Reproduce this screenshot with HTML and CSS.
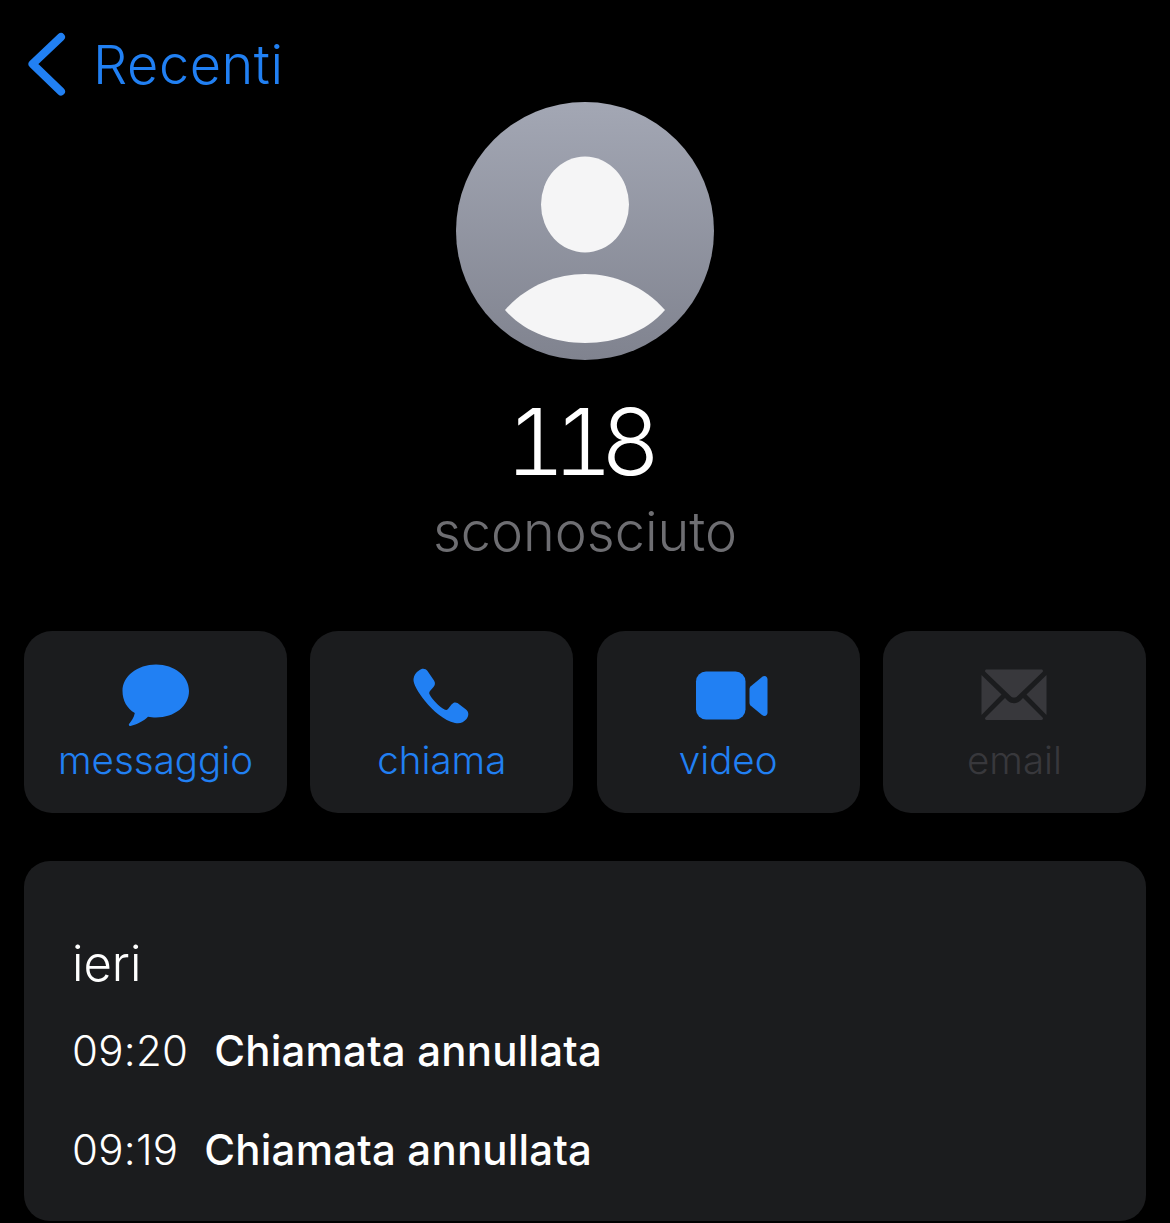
FILE: index.html
```html
<!DOCTYPE html>
<html lang="it">
<head>
<meta charset="utf-8">
<title>118</title>
<link rel="stylesheet" href="styles.css">
</head>
<body>
<div class="screen">
  <header class="nav">
    <svg class="chevron" viewBox="0 0 38 64" width="38" height="64"><path d="M33 5 L4.500 32 L33 59.500" fill="none" stroke="#2180f3" stroke-width="8" stroke-linecap="round" stroke-linejoin="round"/></svg>
    <span class="back-label">Recenti</span>
  </header>
  <section class="profile">
    <svg class="avatar" viewBox="0 0 258 258" width="258" height="258">
      <defs><linearGradient id="av" x1="0" y1="0" x2="0" y2="1"><stop offset="0" stop-color="#a3a7b4"/><stop offset="1" stop-color="#80838f"/></linearGradient></defs>
      <circle cx="129" cy="129" r="129" fill="url(#av)"/>
      <ellipse cx="129" cy="102.500" rx="44" ry="48" fill="#f5f5f6"/>
      <path d="M49 208 C70 184 100 172 129 172 C158 172 188 184 209 208 C190 230 160 241 129 241 C98 241 68 230 49 208 Z" fill="#f5f5f6"/>
    </svg>
    <h1 class="name">118</h1>
    <p class="subtitle">sconosciuto</p>
  </section>
  <nav class="actions">
    <div class="action">
      <svg class="icon" viewBox="-4 0 80 64" width="80" height="64"><path d="M36 2.500 C54.500 2.500 69 14 69 29 C69 44 54.500 55.500 36 55.500 C33 55.500 30.500 55.200 28 54.800 C24 59 17 62.500 10.500 64 C9 64.300 8.300 62.800 9.200 61.800 C11.500 59 14 55.500 14.800 51 C7 46.500 2.500 38.500 2.500 29 C2.500 14 17.500 2.500 36 2.500 Z" fill="#2180f3"/></svg>
      <span class="action-label">messaggio</span>
    </div>
    <div class="action">
      <svg class="icon" viewBox="0 0 80 64" width="80" height="64"><path d="M17 8.500 C20 6 23.500 6.500 25.500 9 L32 18.500 C33.500 21 33.200 23 31.500 25 L28 29 C27 30.300 27 31.500 27.800 32.800 C31 38.500 37 44.500 42.500 47.500 C44 48.300 45 48 46 47 L49.500 42.500 C51.500 40 53.500 40 55.500 41 L64 47.500 C67 50 67 54 64.500 57 C61.500 60.500 58 62 53 61 C42 58.500 31 49 23 39 C16 30 11 22 11.500 17 C12 13 14 10.500 17 8.500 Z" fill="#2180f3"/></svg>
      <span class="action-label">chiama</span>
    </div>
    <div class="action">
      <svg class="icon" viewBox="0 0 80 64" width="80" height="64"><rect x="8" y="9.500" width="49.500" height="48" rx="10" fill="#2180f3"/><path d="M62.500 24.500 L74 15 C76.500 13 79.500 14.200 79.500 17.500 L79.500 50.500 C79.500 53.800 76.500 55 74 53 L62.500 43.500 C61.800 42.800 61.500 42 61.500 41 L61.500 27 C61.500 26 61.800 25.200 62.500 24.500 Z" fill="#2180f3"/></svg>
      <span class="action-label">video</span>
    </div>
    <div class="action is-disabled">
      <svg class="icon" viewBox="-4 1.500 80 64" width="80" height="64">
        <path d="M8.500 9 L63.500 9 C64.800 9 65.500 10.500 64.500 11.500 L39.500 35.500 C37.500 37.500 34.500 37.500 32.500 35.500 L7.500 11.500 C6.500 10.500 7.200 9 8.500 9 Z" fill="#38383c"/>
        <path d="M3.500 14.500 L23.500 34 L3.500 54.500 Z" fill="#38383c"/>
        <path d="M68.500 14.500 L48.500 34 L68.500 54.500 Z" fill="#38383c"/>
        <path d="M27 37.500 L30 40.500 C33.500 43.500 38.500 43.500 42 40.500 L45 37.500 L64.500 57 C65.500 58 64.800 59.500 63.500 59.500 L8.500 59.500 C7.200 59.500 6.500 58 7.500 57 Z" fill="#38383c"/>
      </svg>
      <span class="action-label">email</span>
    </div>
  </nav>
  <section class="card">
    <h2 class="day">ieri</h2>
    <div class="call"><span class="time">09:20</span><span class="status">Chiamata annullata</span></div>
    <div class="call"><span class="time">09:19</span><span class="status">Chiamata annullata</span></div>
  </section>
</div>
</body>
</html>
```
FILE: styles.css
```css
* { box-sizing: border-box; }
html, body { margin: 0; padding: 0; background: #000; }
body { font-family: Inter, "Liberation Sans", sans-serif; }
.screen { width: 1170px; height: 1223px; overflow: hidden; padding: 0 24px; display: flex; flex-direction: column; }
.nav { height: 102px; display: flex; align-items: flex-start; gap: 27px; padding: 32px 0 0 4px; color: #2180f3; }
.chevron { flex: none; }
.back-label { font-size: 54px; line-height: 66px; font-weight: 350; letter-spacing: 0.55px; }
.profile { display: flex; flex-direction: column; align-items: center; }
.avatar { display: block; }
.name { margin: 32px 16px 0 0; font-size: 92px; line-height: 100px; font-weight: 300; color: #fff; letter-spacing: -12px; font-variant-numeric: tabular-nums; }
.subtitle { margin: 10px 0 0; font-size: 54px; line-height: 60px; font-weight: 350; color: #6e6e72; }
.actions { margin-top: 69px; display: grid; grid-template-columns: repeat(4, 263px); justify-content: space-between; }
.action { height: 182px; background: #1b1c1e; border-radius: 28px; display: flex; flex-direction: column; align-items: center; padding-top: 31px; color: #2180f3; }
.icon { display: block; flex: none; }
.action-label { margin-top: 4px; font-size: 38.5px; line-height: 60px; font-weight: 350; }
.is-disabled { color: #38383c; }
.card { margin-top: 48px; flex: none; height: 360px; background: #1b1c1e; border-radius: 26px; padding: 73px 48px 0; color: #fff; }
.day { margin: 0; font-size: 49px; line-height: 60px; font-weight: 300; }
.call { display: flex; gap: 26px; height: 99px; align-items: center; font-size: 42px; position: relative; top: 7px; }
.time { font-weight: 300; letter-spacing: 0.3px; }
.status { font-weight: 500; letter-spacing: 0.2px; }
```
